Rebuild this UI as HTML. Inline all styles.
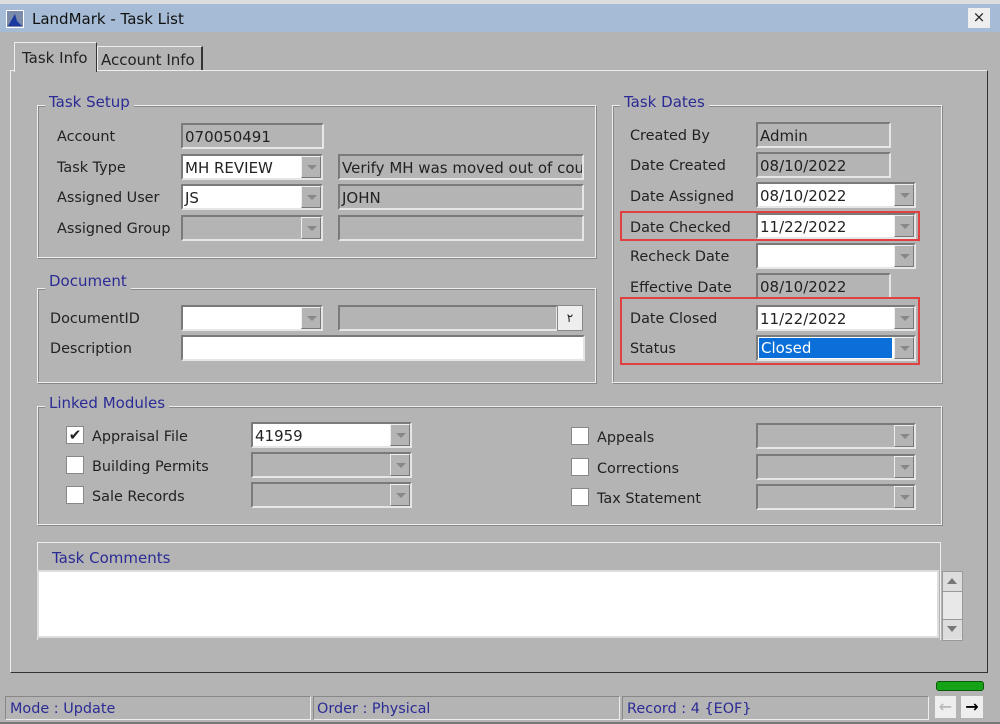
<!DOCTYPE html><html><head><style>
*{box-sizing:border-box;margin:0;padding:0}
body{width:1000px;height:724px;background:#b4b4b4;font-family:"DejaVu Sans","Liberation Sans",sans-serif;font-size:14.4px;color:#222;position:relative;overflow:hidden}
.a{position:absolute}
.lbl{position:absolute;white-space:nowrap;margin-top:2px}
.fs{position:absolute;border:1px solid #eee;box-shadow:inset 1px 1px 0 #888, 1px 1px 0 #888}
.leg{position:absolute;background:#b4b4b4;color:#2b2b96;padding:0 4px;font-size:15px;margin-top:1px}
.in{position:absolute;height:26px;border:2px solid;border-color:#7a7a7a #e6e6e6 #e6e6e6 #7a7a7a;background:#b4b4b4;padding:3px 2px 1px;white-space:nowrap;overflow:hidden;font-size:15px;line-height:18px}
.w{background:#fff}
.ar{position:absolute;top:0;right:0;width:20px;height:22px;background:#b4b4b4;border:1px solid;border-color:#eee #777 #777 #eee}
.ar:after{content:"";position:absolute;left:5px;top:8px;border-left:5px solid transparent;border-right:5px solid transparent;border-top:5px solid #888}
.cb{position:absolute;width:18px;height:18px;background:#fff;border:1px solid #888;font-size:15px;line-height:16px;text-align:center}
.red{position:absolute;border:2px solid #e04040}
</style></head><body>
<div class="a" style="left:0;top:0;width:1000px;height:4px;background:#ddd"></div>
<div class="a" style="left:0;top:4px;width:1000px;height:28px;background:#a6bcd6"></div>
<div class="a" style="left:6px;top:10px;width:18px;height:18px;background:#7a8aa8;border:1px solid #fff"><svg width="16" height="16"><path d="M1 15 L8 3 L10 10 L15 15Z" fill="#1a3aa0"/></svg></div>
<div class="lbl" style="left:32px;top:8px;font-size:15px;color:#111">LandMark - Task List</div>
<div class="a" style="left:968px;top:8px;width:22px;height:20px;background:#eee;text-align:center;font-size:15px;line-height:19px">×</div>
<div class="a" style="left:10px;top:70px;width:978px;height:603px;border:1px solid;border-color:#eee #333 #333 #eee"></div>
<div class="a" style="left:14px;top:42px;width:83px;height:30px;border:1px solid #eee;border-bottom:none;background:#b4b4b4;border-right:1px solid #333"></div>
<div class="lbl" style="left:22px;top:47px;font-size:15px">Task Info</div>
<div class="a" style="left:97px;top:46px;width:106px;height:24px;border:1px solid #eee;border-right:2px solid #333;border-bottom:none"></div>
<div class="lbl" style="left:101px;top:49px;font-size:15px">Account Info</div>

<div class="fs" style="left:37px;top:105px;width:559px;height:153px"></div><div class="leg" style="left:45px;top:92px">Task Setup</div>
<div class="fs" style="left:37px;top:288px;width:559px;height:95px"></div><div class="leg" style="left:45px;top:271px">Document</div>
<div class="fs" style="left:612px;top:105px;width:330px;height:278px"></div><div class="leg" style="left:620px;top:92px">Task Dates</div>
<div class="fs" style="left:37px;top:406px;width:905px;height:119px"></div><div class="leg" style="left:45px;top:393px">Linked Modules</div>
<div class="a" style="left:37px;top:542px;width:904px;height:98px;border:1px solid #eee;border-bottom:none"></div>
<div class="lbl" style="left:52px;top:547px;color:#2b2b96;font-size:15px">Task Comments</div>
<div class="a" style="left:37px;top:570px;width:902px;height:68px;border:2px solid #ddd;background:#fff"></div>
<div class="a" style="left:942px;top:571px;width:21px;height:70px;background:#e8e8e8;border:1px solid #999"></div>
<div class="a" style="left:943px;top:572px;width:19px;height:20px;background:#ddd;border-bottom:1px solid #999"></div>
<div class="a" style="left:947px;top:578px;border-left:5px solid transparent;border-right:5px solid transparent;border-bottom:6px solid #777"></div>
<div class="a" style="left:943px;top:619px;width:19px;height:20px;background:#ddd;border-top:1px solid #999"></div>
<div class="a" style="left:947px;top:626px;border-left:5px solid transparent;border-right:5px solid transparent;border-top:6px solid #777"></div>

<div class="lbl" style="left:57px;top:127px">Account</div>
<div class="lbl" style="left:57px;top:158px">Task Type</div>
<div class="lbl" style="left:57px;top:188px">Assigned User</div>
<div class="lbl" style="left:57px;top:219px">Assigned Group</div>
<div class="in" style="left:181px;top:123px;width:143px">070050491</div>
<div class="in w" style="left:181px;top:154px;width:142px">MH REVIEW<div class="ar"></div></div>
<div class="in" style="left:338px;top:154px;width:246px">Verify MH was moved out of cou</div>
<div class="in w" style="left:181px;top:184px;width:142px">JS<div class="ar"></div></div>
<div class="in" style="left:338px;top:184px;width:246px">JOHN</div>
<div class="in" style="left:181px;top:215px;width:142px"><div class="ar"></div></div>
<div class="in" style="left:338px;top:215px;width:246px"></div>

<div class="lbl" style="left:50px;top:309px">DocumentID</div>
<div class="lbl" style="left:50px;top:339px">Description</div>
<div class="in w" style="left:181px;top:305px;width:142px"><div class="ar"></div></div>
<div class="in" style="left:338px;top:305px;width:220px"></div>
<div class="a" style="left:557px;top:305px;width:26px;height:26px;background:#eee;border:1px solid #888;text-align:center;font-size:12px;line-height:24px">&#1634;</div>
<div class="in w" style="left:181px;top:335px;width:404px"></div>

<div class="lbl" style="left:630px;top:126px">Created By</div>
<div class="lbl" style="left:630px;top:156px">Date Created</div>
<div class="lbl" style="left:630px;top:187px">Date Assigned</div>
<div class="lbl" style="left:630px;top:218px">Date Checked</div>
<div class="lbl" style="left:630px;top:247px">Recheck Date</div>
<div class="lbl" style="left:630px;top:278px">Effective Date</div>
<div class="lbl" style="left:630px;top:309px">Date Closed</div>
<div class="lbl" style="left:630px;top:339px">Status</div>
<div class="in" style="left:756px;top:122px;width:135px">Admin</div>
<div class="in" style="left:756px;top:152px;width:135px">08/10/2022</div>
<div class="in w" style="left:756px;top:182px;width:160px">08/10/2022<div class="ar"></div></div>
<div class="in w" style="left:756px;top:213px;width:160px">11/22/2022<div class="ar"></div></div>
<div class="in w" style="left:756px;top:243px;width:160px"><div class="ar"></div></div>
<div class="in" style="left:756px;top:273px;width:135px">08/10/2022</div>
<div class="in w" style="left:756px;top:305px;width:160px">11/22/2022<div class="ar"></div></div>
<div class="in w" style="left:756px;top:335px;width:160px;padding:0"><div style="position:absolute;left:1px;top:1px;width:133px;height:20px;background:#0a6fd8;color:#fff;padding:0 2px;line-height:21px">Closed</div><div class="ar"></div></div>
<div class="red" style="left:620px;top:211px;width:300px;height:30px"></div>
<div class="red" style="left:620px;top:297px;width:300px;height:68px"></div>

<div class="cb" style="left:66px;top:426px">✔</div>
<div class="cb" style="left:66px;top:456px"></div>
<div class="cb" style="left:66px;top:486px"></div>
<div class="lbl" style="left:92px;top:427px">Appraisal File</div>
<div class="lbl" style="left:92px;top:457px">Building Permits</div>
<div class="lbl" style="left:92px;top:487px">Sale Records</div>
<div class="in w" style="left:251px;top:422px;width:161px">41959<div class="ar"></div></div>
<div class="in" style="left:251px;top:452px;width:161px"><div class="ar"></div></div>
<div class="in" style="left:251px;top:482px;width:161px"><div class="ar"></div></div>
<div class="cb" style="left:571px;top:427px"></div>
<div class="cb" style="left:571px;top:458px"></div>
<div class="cb" style="left:571px;top:488px"></div>
<div class="lbl" style="left:597px;top:428px">Appeals</div>
<div class="lbl" style="left:597px;top:459px">Corrections</div>
<div class="lbl" style="left:597px;top:489px">Tax Statement</div>
<div class="in" style="left:756px;top:423px;width:160px"><div class="ar"></div></div>
<div class="in" style="left:756px;top:454px;width:160px"><div class="ar"></div></div>
<div class="in" style="left:756px;top:484px;width:160px"><div class="ar"></div></div>

<div class="a" style="left:936px;top:681px;width:48px;height:10px;background:#17a317;border:1px solid #0a5a0a;border-radius:3px"></div>
<div class="a" style="left:5px;top:696px;width:306px;height:24px;border:1px solid;border-color:#888 #eee #eee #888"></div>
<div class="a" style="left:313px;top:696px;width:307px;height:24px;border:1px solid;border-color:#888 #eee #eee #888"></div>
<div class="a" style="left:622px;top:696px;width:307px;height:24px;border:1px solid;border-color:#888 #eee #eee #888"></div>
<div class="lbl" style="left:10px;top:699px;color:#2b2b96">Mode : Update</div>
<div class="lbl" style="left:317px;top:699px;color:#2b2b96">Order : Physical</div>
<div class="lbl" style="left:627px;top:699px;color:#2b2b96">Record : 4 {EOF}</div>
<div class="a" style="left:935px;top:696px;width:21px;height:22px;background:#eee;color:#bbb;text-align:center;font-size:16px;line-height:21px;font-weight:bold">&#8592;</div>
<div class="a" style="left:961px;top:696px;width:22px;height:22px;background:#eee;color:#000;text-align:center;font-size:16px;line-height:21px;font-weight:bold">&#8594;</div>
<div class="a" style="left:0;top:722px;width:1000px;height:2px;background:#777"></div>
</body></html>
